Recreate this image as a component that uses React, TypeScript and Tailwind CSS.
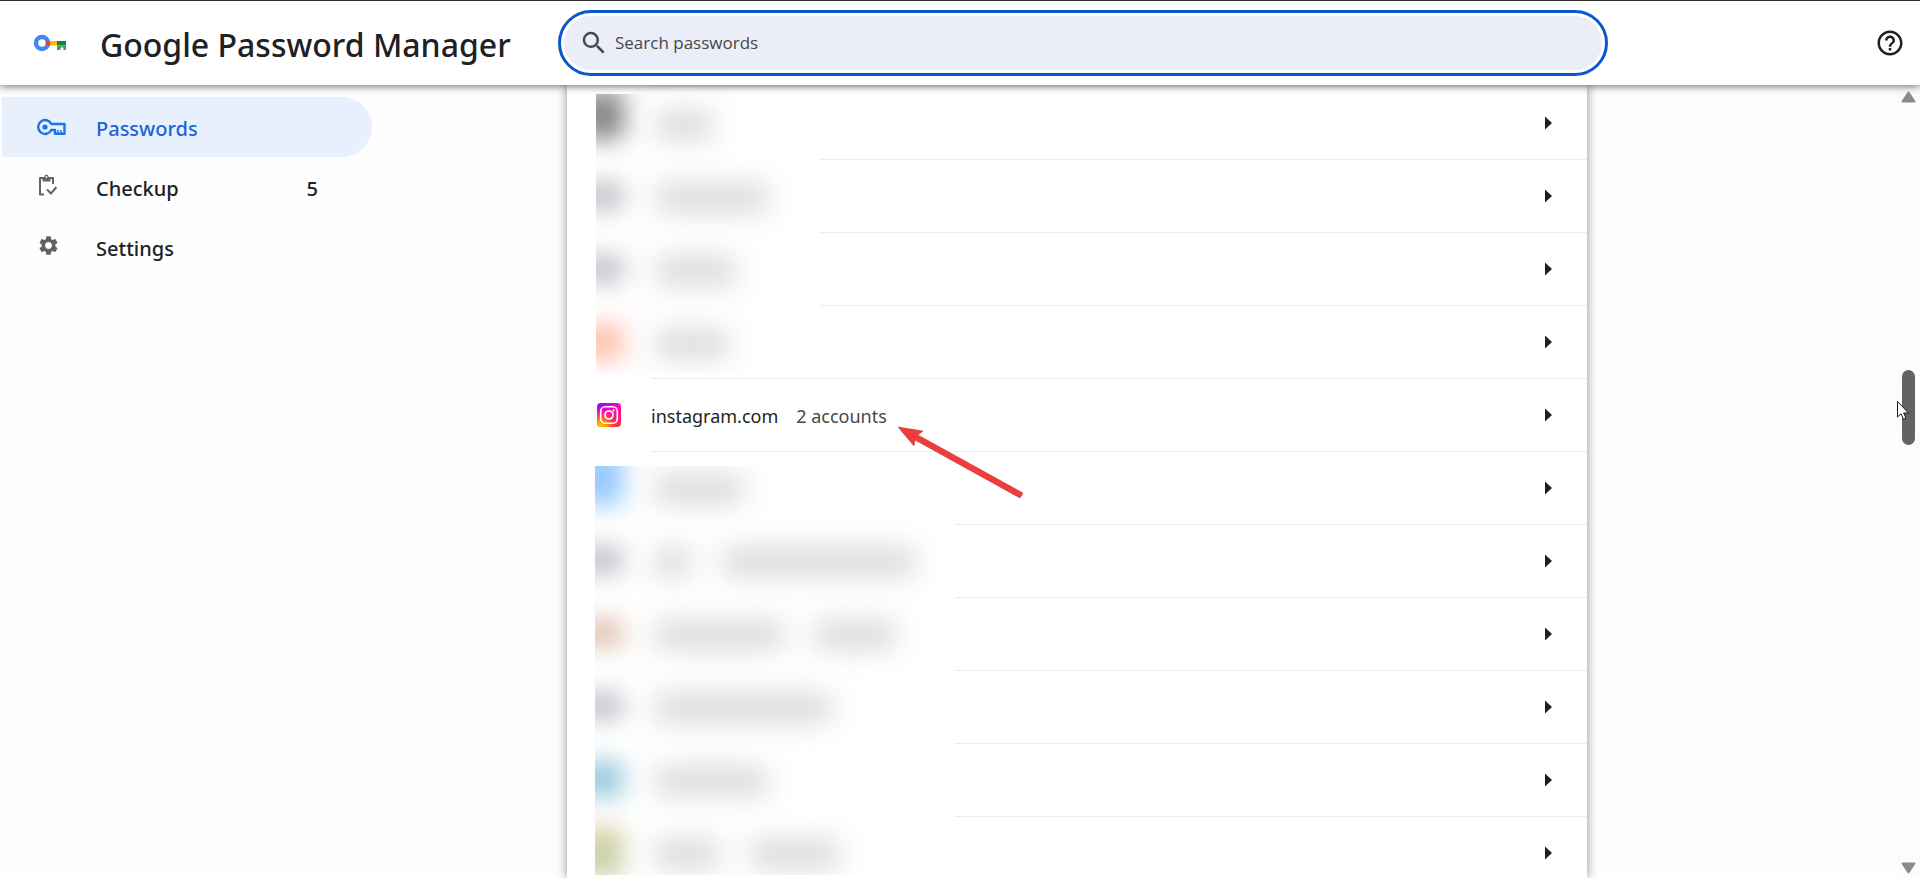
import type { ReactNode } from "react"
import { MdOutlineHelpOutline, MdSearch, MdSettings } from "react-icons/md"

interface Site {
    icon: string
    texts: string[]
}

const hiddenAbove: Site[] = [
    { icon: "bg-[#858585] h-12 -mt-4", texts: ["w-14"] },
    { icon: "bg-[#bfc3c8] h-7", texts: ["w-28"] },
    { icon: "bg-[#bfc3c8] h-7", texts: ["w-20"] },
    { icon: "bg-[#ffc0ad] h-9", texts: ["w-18"] },
]

const hiddenBelow: Site[] = [
    { icon: "bg-[#94c8ff] h-14 -mt-5", texts: ["w-22"] },
    { icon: "bg-[#bfc3c8] h-7", texts: ["w-9", "w-48"] },
    { icon: "bg-[#e0c1b2] h-7", texts: ["w-32", "w-20"] },
    { icon: "bg-[#bfc3c8] h-7", texts: ["w-44"] },
    { icon: "bg-[#98c9df] h-9", texts: ["w-28"] },
    { icon: "bg-linear-to-b from-[#d9cd9c] to-[#bfd1ab] h-12", texts: ["w-16", "w-22"] },
]

function KeyLogo() {
    return (
        <svg width="34" height="20" viewBox="0 0 34 20" aria-hidden="true">
            <path d="M16 8h8v4.500h-8z" fill="#fbbc04" />
            <path d="M24 8h9v4.500h-9z" fill="#188038" />
            <path d="M24 12.500h9V17h-2.500v-2l-1.500-1-1.500 1v2H24z" fill="#34a853" />
            <circle cx="9" cy="10" r="6" fill="none" stroke="#4285f4" strokeWidth="4.500" />
            <path d="M12.500 8H17v4.500h-4.500a5 5 0 0 0 0-4.500z" fill="#ea4335" />
        </svg>
    )
}

function KeyIcon() {
    return (
        <svg width="29" height="18" viewBox="0 0 29 18" fill="none" stroke="#1a73e8" strokeWidth="2.400" strokeLinejoin="round" aria-hidden="true">
            <path d="M14.300 6a6.900 6.900 0 1 0 0 6H18v3.700h9.500V6z" />
            <circle cx="8" cy="9" r="2.600" fill="#1a73e8" stroke="none" />
            <path d="M21 15.500v-3.500M24 15.500v-3.500" strokeWidth="1.500" />
        </svg>
    )
}

function CheckupIcon() {
    return (
        <svg width="20" height="22" viewBox="0 0 20 22" fill="none" stroke="#5f6368" strokeWidth="2" aria-hidden="true">
            <path d="M7 20.500H3V4h13v6" strokeLinejoin="round" />
            <path d="M5.500 3H7.300a2.200 2.200 0 0 1 4.400 0h1.800v4.500h-8z" fill="#5f6368" stroke="none" />
            <circle cx="9.500" cy="3" r="0.900" fill="#fff" stroke="none" />
            <path d="M10 15.500l4 4 5.500-6.500" />
        </svg>
    )
}

function InstagramIcon() {
    return (
        <svg width="24" height="24" viewBox="0 0 24 24" aria-hidden="true">
            <defs>
                <linearGradient id="ig" x1="0.1" y1="0" x2="0.6" y2="1">
                    <stop offset="0" stopColor="#7a10ff" />
                    <stop offset="0.35" stopColor="#ff00c8" />
                    <stop offset="1" stopColor="#ff2a45" />
                </linearGradient>
                <radialGradient id="igGlow" cx="0.15" cy="1" r="0.75">
                    <stop offset="0" stopColor="#ffd000" />
                    <stop offset="0.4" stopColor="#ff8a00" />
                    <stop offset="1" stopColor="#ff2a55" stopOpacity="0" />
                </radialGradient>
            </defs>
            <rect width="24" height="24" rx="4" fill="url(#ig)" />
            <rect width="24" height="24" rx="4" fill="url(#igGlow)" />
            <rect x="3.700" y="3.700" width="16.600" height="16.600" rx="4.500" fill="none" stroke="#fff" strokeWidth="1.600" />
            <circle cx="12" cy="12" r="4" fill="none" stroke="#fff" strokeWidth="1.700" />
            <circle cx="16.600" cy="7.400" r="1.100" fill="#fff" />
        </svg>
    )
}

function Row({ line, label, children }: { line: string; label: string; children?: ReactNode }) {
    return (
        <li className="relative h-[73px]">
            <button aria-label={label} className="flex h-full w-full items-center pr-[35px] pl-[30px] text-left">
                {children}
                <svg className="ml-auto" width="7" height="14" viewBox="0 0 7 14" aria-hidden="true">
                    <path d="M0 0.500L7 7L0 13.500z" fill="#1f1f1f" />
                </svg>
            </button>
            <span className={`absolute top-0 right-0 h-px bg-[#ececec] ${line}`} />
        </li>
    )
}

function Redacted({ sites, className }: { sites: Site[]; className: string }) {
    return (
        <div className={`absolute overflow-hidden bg-white ${className}`}>
            {sites.map((site, i) => (
                <div key={i} className="flex h-[73px] items-center">
                    <div className={`-ml-4 w-11 shrink-0 blur-[12px] ${site.icon}`} />
                    <div className="ml-8 flex gap-8">
                        {site.texts.map((width) => (
                            <div key={width} className={`mt-1 h-7 bg-[#d8d8d8] blur-[14px] ${width}`} />
                        ))}
                    </div>
                </div>
            ))}
        </div>
    )
}

function Header() {
    return (
        <header className="relative z-20 flex h-[85px] shrink-0 items-center border-t border-[#303033] bg-white shadow-[0_1px_8px_rgba(0,0,0,0.6)]">
            <div className="flex w-[558px] shrink-0 items-center pl-[33px]">
                <KeyLogo />
                <h1 className="ml-[33px] pt-1 text-[32px] font-medium whitespace-nowrap text-[#202124]">Google Password Manager</h1>
            </div>
            <div className="w-[1050px] shrink rounded-full border-3 border-[#0b57d0] p-[3px]">
                <label className="flex h-[54px] items-center rounded-full bg-[#ebeef8] pl-[15px]">
                    <MdSearch className="size-[30px] text-[#474747]" />
                    <input type="text" aria-label="Search passwords" placeholder="Search passwords" className="ml-1.5 flex-1 bg-transparent font-['Open_Sans',sans-serif] text-[17px] outline-none placeholder:text-[#474747]" />
                </label>
            </div>
            <button aria-label="Help" className="mr-[15px] ml-auto">
                <MdOutlineHelpOutline className="size-[30px] text-[#1f1f1f]" />
            </button>
        </header>
    )
}

function NavItem({ href, icon, label, count, active }: { href: string; icon: ReactNode; label: string; count?: number; active?: boolean }) {
    return (
        <a href={href} className={`flex h-[60px] w-[370px] items-center rounded-r-full pl-[35px] ${active ? "bg-[#e8effd] text-[#1967d2]" : ""}`}>
            <span className={`w-[59px] ${active ? "" : "pb-1"}`}>{icon}</span>
            <span className="pt-1">{label}</span>
            {count && <span className="mr-[54px] ml-auto pt-1">{count}</span>}
        </a>
    )
}

function Sidebar() {
    return (
        <nav className="w-[567px] shrink-0 pt-3 pl-0.5 text-[20px] font-medium text-[#202124]">
            <NavItem href="#passwords" icon={<KeyIcon />} label="Passwords" active />
            <NavItem href="#checkup" icon={<CheckupIcon />} label="Checkup" count={5} />
            <NavItem href="#settings" icon={<MdSettings className="size-[23px] text-[#5f6368]" />} label="Settings" />
        </nav>
    )
}

function Scrollbar() {
    return (
        <div className="relative flex w-[23px] shrink-0 flex-col items-center justify-between bg-[#fcfcfc] pt-1.5 pb-1">
            <svg width="15" height="12" viewBox="0 0 15 12" aria-hidden="true">
                <path d="M7.500 1.500L13.500 10.500H1.500z" fill="#8b8b8b" stroke="#8b8b8b" strokeWidth="2" strokeLinejoin="round" />
            </svg>
            <svg width="15" height="12" viewBox="0 0 15 12" aria-hidden="true">
                <path d="M7.500 10.500L13.500 1.500H1.500z" fill="#8b8b8b" stroke="#8b8b8b" strokeWidth="2" strokeLinejoin="round" />
            </svg>
            <div className="absolute top-[285px] left-[5px] h-[75px] w-[13px] rounded-full bg-[#636363]" />
            <svg className="absolute top-[316px] left-0" width="13" height="19" viewBox="0 0 13 19" aria-hidden="true">
                <path d="M0.500 0.500V16L4 12.800L6.500 18.300L9 17.200L6.700 12H11.500z" fill="#fff" stroke="#1c1c28" />
            </svg>
        </div>
    )
}

export default function App() {
    return (
        <div className="flex h-screen flex-col overflow-hidden bg-[#fefefe] font-['Noto_Sans',sans-serif]">
            <Header />
            <div className="flex min-h-0 flex-1">
                <Sidebar />
                <main className="relative w-[1020px] bg-white shadow-[0_0_10px_rgba(0,0,0,0.45)]">
                    <ul className="pt-px">
                        {hiddenAbove.map((_, i) => (
                            <Row key={i} label="Hidden site" line={i === 0 ? "left-[84px]" : "left-[253px]"} />
                        ))}
                        <Row label="instagram.com" line="left-[84px]">
                            <InstagramIcon />
                            <span className="ml-[30px] pt-1 text-[18px] text-[#1f1f1f]">instagram.com</span>
                            <span className="ml-[18px] pt-1 text-[18px] text-[#474747]">2 accounts</span>
                        </Row>
                        {hiddenBelow.map((_, i) => (
                            <Row key={i} label="Hidden site" line={i === 0 ? "left-[84px]" : "left-[388px]"} />
                        ))}
                    </ul>
                    <Redacted sites={hiddenAbove} className="top-[9px] left-[29px] h-[280px] w-[224px] *:-translate-y-2" />
                    <Redacted sites={hiddenBelow} className="top-[381px] left-[28px] h-[409px] w-[360px] *:-translate-y-4" />
                    <svg className="absolute top-[341px] left-[331px]" width="126" height="72" viewBox="0 0 126 72" aria-hidden="true">
                        <path d="M0 1L25 5L20 9L125 67L122 72L17 14L16 20z" fill="#f23c3c" stroke="#a33" strokeWidth="0.500" />
                    </svg>
                </main>
                <div className="flex-1" />
                <Scrollbar />
            </div>
        </div>
    )
}
